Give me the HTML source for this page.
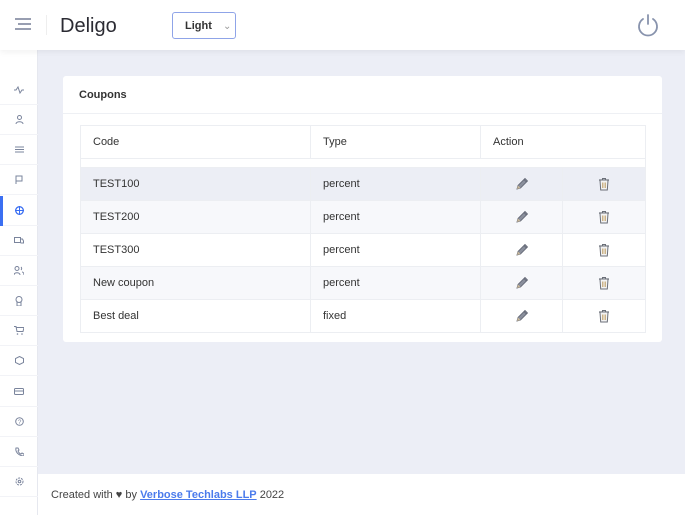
<!DOCTYPE html>
<html><head><style>
*{box-sizing:border-box;margin:0;padding:0}
body{width:685px;height:515px;overflow:hidden;background:#eceef6;font-family:"Liberation Sans",sans-serif;position:relative;color:#333}
.hdr{position:absolute;left:0;top:0;width:685px;height:50px;background:#fff;box-shadow:0 2px 6px rgba(0,0,0,.06);z-index:2}
.side{position:absolute;left:0;top:50px;width:38px;height:465px;background:#fff;border-right:1px solid #e6e8ef}
.si{position:absolute;left:0;width:38px;height:30px;border-bottom:1px solid #f2f3f7;display:flex;align-items:center;justify-content:center}
.card{position:absolute;left:63px;top:76px;width:599px;height:266px;background:#fff;border-radius:3px}
table{position:absolute;left:17px;top:49px;width:566px;border-collapse:collapse;font-size:11px;color:#333}
td{border:1px solid #eceef2;padding:0 12px;height:33px}
td.c{text-align:center;vertical-align:middle}
td.c svg{display:inline-block;vertical-align:middle}
.foot{position:absolute;left:38px;top:474px;width:647px;height:41px;background:#fff;font-size:11px;padding:15px 13px;color:#444}
</style></head><body>
<svg width="0" height="0" style="position:absolute"><defs>
<symbol id="pen" viewBox="0 0 14 14"><path d="M2 12l1-3.5 7-7 2.5 2.5-7 7z" fill="#8a8f9c" stroke="#5e6370" stroke-width=".8"/><path d="M2 12l1-3.5 2.5 2.5z" fill="#c9b89a"/><path d="M9 2.5l2.5 2.5" stroke="#5e6370" stroke-width=".8"/></symbol>
<symbol id="bin" viewBox="0 0 12 14"><path d="M1 3h10" stroke="#6b6f78" stroke-width="1.2"/><path d="M4.5 3V1.5h3V3" fill="none" stroke="#6b6f78"/><path d="M2 3.5l.7 9.5h6.6l.7-9.5" fill="#f3f3f3" stroke="#6b6f78"/><path d="M4.5 5.5v5.5M6 5.5v5.5M7.5 5.5v5.5" stroke="#c2a46e" stroke-width=".8"/></symbol>
</defs></svg>
<div class="hdr">
 <svg style="position:absolute;left:15px;top:18px" width="16" height="12"><g stroke="#6b7590" stroke-width="1.4"><line x1="0" y1="1" x2="16" y2="1"/><line x1="3" y1="6" x2="16" y2="6"/><line x1="0" y1="11" x2="16" y2="11"/></g></svg>
 <div style="position:absolute;left:46px;top:15px;width:1px;height:20px;background:#eee"></div>
 <div style="position:absolute;left:60px;top:15px;font-size:20px;color:#2b2b33">Deligo</div>
 <div style="position:absolute;left:172px;top:12px;width:64px;height:27px;border:1px solid #8fa4e8;border-radius:3px;font-size:11px;font-weight:bold;color:#333;padding:7px 0 0 12px">Light <span style="font-weight:normal;color:#999;margin-left:8px;font-size:10px">⌄</span></div>
 <svg style="position:absolute;left:637px;top:13px" width="22" height="24" viewBox="0 0 22 24"><path d="M6 6A9 9 0 1 0 16 6" fill="none" stroke="#8893ad" stroke-width="1.8" stroke-linecap="round"/><line x1="11" y1="2" x2="11" y2="11" stroke="#8893ad" stroke-width="1.8" stroke-linecap="round"/></svg>
</div>
<div class="side">
 <div class="si" style="top:25px"><svg width="10" height="8"><path d="M0 4h2l2-3 2 6 2-3h2" fill="none" stroke="#7a849c" stroke-width="1"/></svg></div>
 <div class="si" style="top:55px"><svg width="9" height="9"><circle cx="4.5" cy="2.5" r="2" fill="none" stroke="#7a849c"/><path d="M1 9c0-3 7-3 7 0" fill="none" stroke="#7a849c"/></svg></div>
 <div class="si" style="top:85px"><svg width="9" height="7"><g stroke="#7a849c"><line x1="0" y1="1" x2="9" y2="1"/><line x1="0" y1="3.5" x2="9" y2="3.5"/><line x1="0" y1="6" x2="9" y2="6"/></g></svg></div>
 <div class="si" style="top:115px"><svg width="8" height="9"><path d="M1 9V1h6v5H1" fill="none" stroke="#7a849c"/></svg></div>
 <div class="si" style="top:146px"><div style="position:absolute;left:0;top:0;width:3px;height:30px;background:#3b6ff2"></div><svg width="9" height="9"><circle cx="4.5" cy="4.5" r="3.8" fill="none" stroke="#3b6ff2" stroke-width="1.3"/><line x1="0" y1="4.5" x2="9" y2="4.5" stroke="#3b6ff2"/><line x1="4.5" y1="0" x2="4.5" y2="9" stroke="#3b6ff2"/></svg></div>
 <div class="si" style="top:176px"><svg width="10" height="8"><rect x="0.5" y="0.5" width="6" height="5" fill="none" stroke="#7a849c"/><path d="M6.5 2h2l1 2v2h-3" fill="none" stroke="#7a849c"/></svg></div>
 <div class="si" style="top:206px"><svg width="10" height="9"><circle cx="3" cy="2.5" r="2" fill="none" stroke="#7a849c"/><path d="M0 9c0-3 6-3 6 0M7 1a2 2 0 0 1 0 3M8 6c1 0 2 1 2 3" fill="none" stroke="#7a849c"/></svg></div>
 <div class="si" style="top:236px"><svg width="8" height="10"><circle cx="4" cy="3.5" r="3" fill="none" stroke="#7a849c"/><path d="M2 6v4h4V6" fill="none" stroke="#7a849c"/></svg></div>
 <div class="si" style="top:266px"><svg width="10" height="9"><path d="M0 .5h2l1 5h6l1-4H2.5" fill="none" stroke="#7a849c"/><circle cx="3.5" cy="8" r=".8" fill="#7a849c"/><circle cx="8" cy="8" r=".8" fill="#7a849c"/></svg></div>
 <div class="si" style="top:296px"><svg width="9" height="9"><path d="M4.5.5l4 2v4l-4 2-4-2v-4z" fill="none" stroke="#7a849c"/></svg></div>
 <div class="si" style="top:327px"><svg width="10" height="7"><rect x=".5" y=".5" width="9" height="6" rx="1" fill="none" stroke="#7a849c"/><line x1="0" y1="3" x2="10" y2="3" stroke="#7a849c"/></svg></div>
 <div class="si" style="top:357px"><svg width="9" height="9"><circle cx="4.5" cy="4.5" r="3.8" fill="none" stroke="#7a849c"/><text x="3" y="7" font-size="6" fill="#7a849c">?</text></svg></div>
 <div class="si" style="top:387px"><svg width="9" height="9"><path d="M1 1l2 0 1 2-1 1c1 2 2 3 3 3l1-1 2 1v2C4 9 0 5 1 1z" fill="none" stroke="#7a849c"/></svg></div>
 <div class="si" style="top:417px"><svg width="9" height="9"><circle cx="4.5" cy="4.5" r="3.5" fill="none" stroke="#7a849c" stroke-dasharray="2 1"/><circle cx="4.5" cy="4.5" r="1.3" fill="none" stroke="#7a849c"/></svg></div>
</div>
<div class="card">
 <div style="position:absolute;left:16px;top:13px;font-size:11px;font-weight:bold;color:#333">Coupons</div>
 <div style="position:absolute;left:0;top:37px;width:599px;height:1px;background:#eef0f4"></div>
 <table>
  <tr><td style="width:230px">Code</td><td style="width:170px">Type</td><td colspan="2">Action</td></tr>
  <tr><td colspan="4" style="height:9px;border-top:none"></td></tr>
  <tr style="background:#eceef5"><td>TEST100</td><td>percent</td><td class="c" style="width:82px"><svg width="14" height="14"><use href="#pen"/></svg></td><td class="c"><svg width="12" height="14"><use href="#bin"/></svg></td></tr>
  <tr style="background:#f7f8fb"><td>TEST200</td><td>percent</td><td class="c"><svg width="14" height="14"><use href="#pen"/></svg></td><td class="c"><svg width="12" height="14"><use href="#bin"/></svg></td></tr>
  <tr><td>TEST300</td><td>percent</td><td class="c"><svg width="14" height="14"><use href="#pen"/></svg></td><td class="c"><svg width="12" height="14"><use href="#bin"/></svg></td></tr>
  <tr style="background:#f7f8fb"><td>New coupon</td><td>percent</td><td class="c"><svg width="14" height="14"><use href="#pen"/></svg></td><td class="c"><svg width="12" height="14"><use href="#bin"/></svg></td></tr>
  <tr><td>Best deal</td><td>fixed</td><td class="c"><svg width="14" height="14"><use href="#pen"/></svg></td><td class="c"><svg width="12" height="14"><use href="#bin"/></svg></td></tr>
 </table>
</div>
<div class="foot">Created with ♥ by <a style="color:#4b7bec;font-weight:bold;text-decoration:underline">Verbose Techlabs LLP</a> 2022</div>
</body></html>
